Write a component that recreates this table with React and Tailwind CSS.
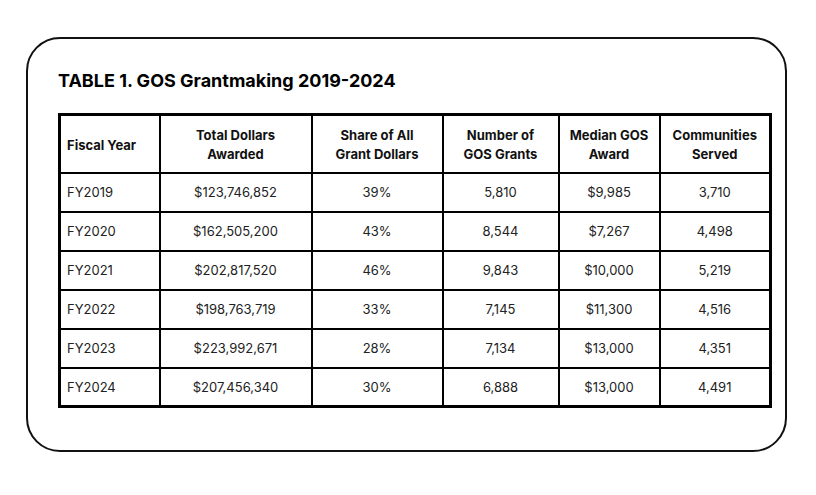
import React from "react";

const rows = [
  ["FY2019", "$123,746,852", "39%", "5,810", "$9,985", "3,710"],
  ["FY2020", "$162,505,200", "43%", "8,544", "$7,267", "4,498"],
  ["FY2021", "$202,817,520", "46%", "9,843", "$10,000", "5,219"],
  ["FY2022", "$198,763,719", "33%", "7,145", "$11,300", "4,516"],
  ["FY2023", "$223,992,671", "28%", "7,134", "$13,000", "4,351"],
  ["FY2024", "$207,456,340", "30%", "6,888", "$13,000", "4,491"],
];

export default function App() {
  return (
    <div
      className="w-[816px] h-[495px] bg-white pt-[37px] pl-[26px] text-[#111]"
      style={{ fontFamily: "Inter, 'Open Sans', sans-serif" }}
    >
      <div className="w-[761px] h-[415px] border-2 border-[#111] rounded-[34px] pl-[30px] pt-[28px]">
        <h1 className="text-[18px] leading-[28px] font-bold text-black">
          TABLE 1. GOS Grantmaking 2019-2024
        </h1>
        <table className="mt-[18px] border-collapse border-[3px] border-black text-[13px] w-[711px] table-fixed">
          <colgroup>
            <col className="w-[100px]" />
            <col className="w-[152px]" />
            <col className="w-[131px]" />
            <col className="w-[116px]" />
            <col className="w-[101px]" />
            <col className="w-[111px]" />
          </colgroup>
          <thead>
            <tr className="h-[58px] font-bold leading-[19px]">
              <th className="border-2 border-black text-left pl-[6px] pt-[3px] font-bold">Fiscal Year</th>
              <th className="border-2 border-black text-center pt-[3px] font-bold">Total Dollars<br />Awarded</th>
              <th className="border-2 border-black text-center pt-[3px] font-bold">Share of All<br />Grant Dollars</th>
              <th className="border-2 border-black text-center pt-[3px] font-bold">Number of<br />GOS Grants</th>
              <th className="border-2 border-black text-center pt-[3px] font-bold">Median GOS<br />Award</th>
              <th className="border-2 border-black text-center pt-[3px] font-bold">Communities<br />Served</th>
            </tr>
          </thead>
          <tbody>
            {rows.map((r) => (
              <tr key={r[0]} className="h-[39px]">
                {r.map((c, i) => (
                  <td
                    key={i}
                    className={
                      i === 0
                        ? "border-2 border-black text-left pl-[6px] pt-[1px] text-[#222]"
                        : "border-2 border-black text-center pt-[1px] text-[#222]"
                    }
                  >
                    {c}
                  </td>
                ))}
              </tr>
            ))}
          </tbody>
        </table>
      </div>
    </div>
  );
}
